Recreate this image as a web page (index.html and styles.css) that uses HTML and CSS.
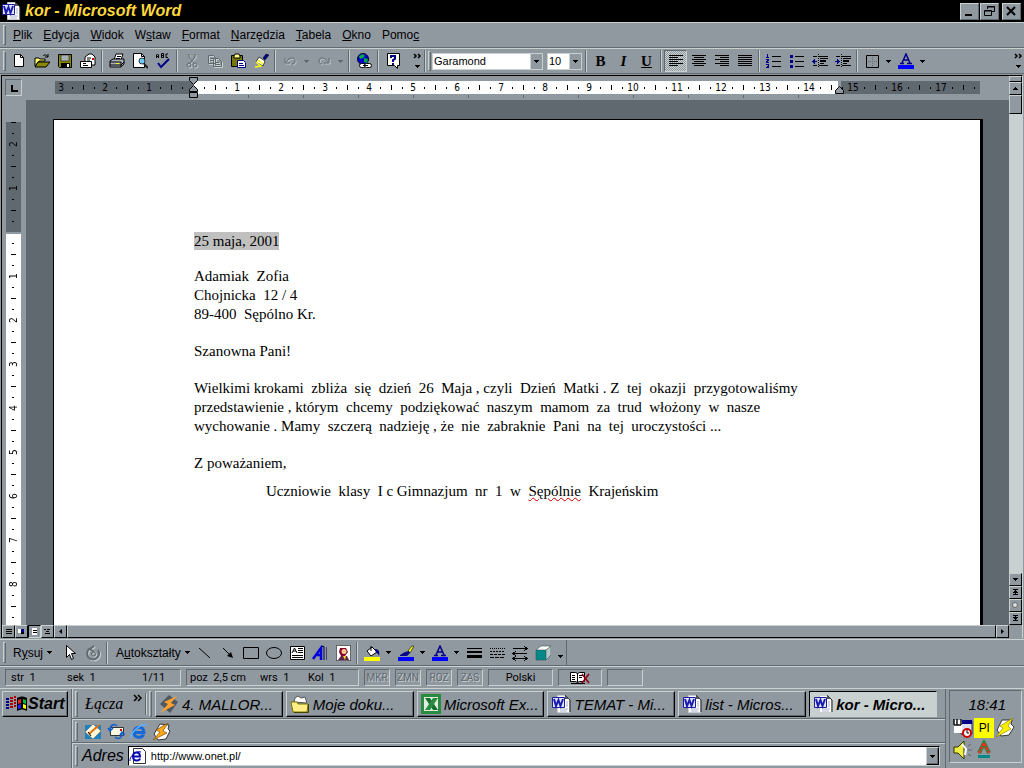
FILE: index.html
```html
<!DOCTYPE html>
<html lang="pl">
<head>
<meta charset="utf-8">
<title>kor - Microsoft Word</title>
<link rel="stylesheet" href="styles.css">
</head>
<body>
<svg class="defs" width="0" height="0" aria-hidden="true">
  <symbol id="word" viewBox="0 0 20 20">
    <path d="M6.500 1.500h8l4 4v13h-12z" fill="#fff" stroke="#c8ccd0"/><path d="M14 1l5 5v12" fill="none" stroke="#222"/><path d="M14 1v4h4z" fill="#555"/>
    <path d="M15 8h2M15 10h2M15 12h2M9 15h8M9 17h7" stroke="#a8b0c8"/>
    <path d="M1.500 3.500h12v10h-12z" fill="#dfe6ff" stroke="#1c1c9c"/>
    <path d="M3 5l2 7 2.500-6 2 6L12 5" fill="none" stroke="#1c1cac" stroke-width="2"/>
  </symbol>
  <symbol id="more" viewBox="0 0 12 16">
    <path d="M2 1l2 2-2 2M6 1l2 2-2 2" transform="translate(1)" fill="none" stroke="#000" stroke-width="1.5"/>
    <path d="M4 12h5v1H8v1H7v1H6v-1H5v-1H4z"/>
  </symbol>
  <symbol id="tri" viewBox="0 0 5 3"><path d="M0 0h5v1H4v1H3v1H2V2H1V1H0z"/></symbol>
  <symbol id="bolt" viewBox="0 0 18 18">
    <path d="M7 1l9 1-1 4 2 2-4 8-8 1-4-6z" fill="#fff" stroke="#333"/>
    <path d="M15 0L3 7l4 2-7 8 14-7-4-2z" fill="#ffa818" stroke="#7a4a10" stroke-width=".7"/>
  </symbol>
</svg>

<header class="titlebar">
  <svg class="ic20"><use href="#word"/></svg>
  <h1>kor - Microsoft Word</h1>
  <button class="win" aria-label="Minimalizuj"><svg width="13" height="13"><path d="M2 9h7v2H2z"/></svg></button>
  <button class="win" aria-label="Przywróć"><svg width="13" height="13" fill="none" stroke="#000"><path d="M4.500 4V1.500h7v5H9M4 2h8M1.500 5.500h7v5h-7zM1 6h8"/></svg></button>
  <button class="win close" aria-label="Zamknij"><svg width="13" height="13"><path d="M2 2l8 8M10 2l-8 8" stroke="#000" stroke-width="2"/></svg></button>
</header>

<nav class="menubar bar">
  <i class="grip"></i>
  <a href="#"><u>P</u>lik</a><a href="#"><u>E</u>dycja</a><a href="#"><u>W</u>idok</a><a href="#">W<u>s</u>taw</a><a href="#"><u>F</u>ormat</a><a href="#"><u>N</u>arzędzia</a><a href="#"><u>T</u>abela</a><a href="#"><u>O</u>kno</a><a href="#">Pomo<u>c</u></a>
</nav>

<div class="toolbar bar" role="toolbar" aria-label="Standardowy i formatowanie">
  <i class="grip"></i>
  <button class="tb" aria-label="Nowy"><svg class="ic"><path d="M3.500 1.500h6l3 3v9h-9z" fill="#fff" stroke="#000"/><path d="M9.500 1.500v3h3" fill="none" stroke="#000"/></svg></button>
  <button class="tb" aria-label="Otwórz"><svg class="ic"><path d="M1 5h4l1 1h5v2H5l-4 5z" fill="#ff6" stroke="#000"/><path d="M1 14l3-5h12l-4 5z" fill="#880" stroke="#000"/><path d="M9 3c2-2 4-1 5 1m0-3v3h-3" fill="none" stroke="#000"/></svg></button>
  <button class="tb" aria-label="Zapisz"><svg class="ic"><path d="M1.500 1.500h13v13h-12l-1-1z" fill="#880" stroke="#000"/><path d="M4 2h8v6H4z" fill="#a8b0b8" stroke="#000" stroke-width=".5"/><path d="M4 10h9v5H4z"/><path d="M10 11h2v3h-2z" fill="#fff"/></svg></button>
  <button class="tb" aria-label="Poczta"><svg class="ic"><path d="M5 4l4-3h3l3 3v8H5z" fill="#fff" stroke="#000"/><path d="M7 5h4M7 7h3" stroke="#000"/><path d="M12 5h2v2h-2z" fill="#c00"/><path d="M.500 8.500h11v6H.500z" fill="#fff" stroke="#000"/><path d="M3 10.500h3M3 12.500h5" stroke="#000"/></svg></button>
  <i class="sep"></i>
  <button class="tb" aria-label="Drukuj"><svg class="ic"><path d="M5 7l2-6h7l-2 6" fill="#fff" stroke="#000"/><path d="M8 3.500h4M7 5.500h4" stroke="#000"/><path d="M1 8l3-2h11v5l-3 3H1z" fill="#a8b0b8" stroke="#000"/><path d="M1 9h11v5M1 12h11l3-3" fill="none" stroke="#000"/><path d="M7 10h3v1H7z" fill="#ff0"/></svg></button>
  <button class="tb" aria-label="Podgląd wydruku"><svg class="ic"><path d="M1.500.500h8l3 3v11h-11z" fill="#fff" stroke="#000"/><path d="M9.500.500v3h3" fill="none" stroke="#000"/><circle cx="10" cy="8" r="3" fill="#6cf" stroke="#333"/><path d="M12 11l4 4" stroke="#222" stroke-width="2"/></svg></button>
  <button class="tb" aria-label="Pisownia"><svg class="ic"><path d="M1.500 5V2l1-1 1 1v3M1 3.500h3M6.500.500v4h2v-4h-2m0 2h2M13 1h-2v3.500h2" fill="none" stroke="#000"/><path d="M3 10l3 4 8-8" fill="none" stroke="#008" stroke-width="2"/></svg></button>
  <i class="sep"></i>
  <button class="tb" aria-label="Wytnij" disabled><svg class="ic off"><path d="M5 1v3l5 6M11 1v3l-5 6"/><circle cx="5" cy="12" r="2"/><circle cx="11" cy="12" r="2"/></svg></button>
  <button class="tb" aria-label="Kopiuj" disabled><svg class="ic off"><path d="M1.500 2.500h5l2 2v6h-7zM6.500 5.500h5l3 3v5h-8zM3 5.500h3M3 7.500h3M8 9.500h4M8 11.500h5"/></svg></button>
  <button class="tb" aria-label="Wklej"><svg class="ic"><path d="M1.500 2.500h11v11h-11z" fill="#770" stroke="#000"/><path d="M4 3l1-2h4l1 2v2H4z" fill="#ff8" stroke="#000"/><path d="M7.500 7.500h6l2 2v5h-8z" fill="#fff" stroke="#008"/><path d="M9 10.500h4M9 12.500h5" stroke="#008"/></svg></button>
  <button class="tb" aria-label="Malarz formatów"><svg class="ic"><path d="M10 5l3-4 3 1-4 5z" fill="#008" stroke="#000" stroke-width=".5"/><path d="M6 4l6 4-2 5-7-4z" fill="#fff" stroke="#000" stroke-width=".7"/><path d="M5 7l5 4M3 9l5 4-6 1" fill="none" stroke="#ff0" stroke-width="1.500"/></svg></button>
  <i class="sep"></i>
  <button class="tb" aria-label="Cofnij" disabled><svg class="ic off"><path d="M3 5v5h5M4 9c3-5 9-5 9-1 0 2-1 3-3 3"/></svg></button>
  <button class="dd" aria-label="Lista cofania" disabled><svg class="tri dim"><use href="#tri"/></svg></button>
  <button class="tb" aria-label="Ponów" disabled><svg class="ic off"><path d="M13 5v5H8M12 9C9 4 3 4 3 8c0 2 1 3 3 3"/></svg></button>
  <button class="dd" aria-label="Lista ponawiania" disabled><svg class="tri dim"><use href="#tri"/></svg></button>
  <i class="sep"></i>
  <button class="tb" aria-label="Hiperłącze"><svg class="ic"><circle cx="7" cy="6" r="5.500" fill="#00c" stroke="#003"/><path d="M3 3l4-2 2 2-2 2-3 1zM8 5l4 1-1 4-3-1z" fill="#0a4"/><rect x="3.500" y="10.500" width="6" height="4" rx="2" fill="#fff" stroke="#000"/><rect x="8.500" y="10.500" width="7" height="4" rx="2" fill="#fff" stroke="#000"/><path d="M7 12.500h5" stroke="#000"/></svg></button>
  <i class="sep"></i>
  <button class="tb" aria-label="Pomoc"><svg class="ic"><path d="M2.500.500h12v12h-2v3l-3-3h-7z" fill="#ffe" stroke="#000"/><path d="M6 5V3h4v3L8 7v2" fill="none" stroke="#008" stroke-width="2"/><path d="M7 10h2v2H7z" fill="#008"/></svg></button>
  <button class="more" aria-label="Więcej przycisków"><svg width="12" height="16"><use href="#more"/></svg></button>
  <i class="sep narrow"></i>
  <i class="grip second"></i>
  <select class="combo face" aria-label="Czcionka"><option>Garamond</option></select>
  <select class="combo size" aria-label="Rozmiar"><option>10</option></select>
  <i class="sep"></i>
  <button class="tb glyph" aria-label="Pogrubienie"><b>B</b></button>
  <button class="tb glyph" aria-label="Kursywa"><em>I</em></button>
  <button class="tb glyph" aria-label="Podkreślenie"><u>U</u></button>
  <i class="sep"></i>
  <button class="tb on" aria-label="Do lewej" aria-pressed="true"><svg class="ic ln"><path d="M1 2.500h14M1 4.500h9M1 6.500h14M1 8.500h9M1 10.500h14M1 12.500h9"/></svg></button>
  <button class="tb" aria-label="Do środka"><svg class="ic ln"><path d="M1 2.500h14M3 4.500h10M1 6.500h14M3 8.500h10M1 10.500h14M3 12.500h10"/></svg></button>
  <button class="tb" aria-label="Do prawej"><svg class="ic ln"><path d="M1 2.500h14M6 4.500h9M1 6.500h14M6 8.500h9M1 10.500h14M6 12.500h9"/></svg></button>
  <button class="tb" aria-label="Wyjustuj"><svg class="ic ln"><path d="M1 2.500h14M1 4.500h14M1 6.500h14M1 8.500h14M1 10.500h14M1 12.500h14"/></svg></button>
  <i class="sep"></i>
  <button class="tb" aria-label="Numerowanie"><svg class="ic ln"><path d="M6 3.500h9M6 8.500h9M6 13.500h9"/><path d="M.500 1.500h1v3M0 4.500h3M0 6.500h2.500v1l-2 1v1H3M0 11.500h2.500v3H0M1 13h2" stroke="#008"/></svg></button>
  <button class="tb" aria-label="Wypunktowanie"><svg class="ic ln"><path d="M6 3.500h9M6 8.500h9M6 13.500h9"/><path d="M1 2h3v3H1zM1 7h3v3H1zM1 12h3v3H1z" fill="#008" stroke="none"/></svg></button>
  <button class="tb" aria-label="Zmniejsz wcięcie"><svg class="ic ln"><path d="M1 3.500h4M7 3.500h9M8 5.500h8M8 10.500h4M1 12.500h4M7 12.500h9"/><path d="M6.500 1v14" stroke-dasharray="1 1"/><path d="M8 8h6" stroke-width="2"/><path d="M0 8.500h5M2.500 6v5M1.500 7v3" stroke="#008"/></svg></button>
  <button class="tb" aria-label="Zwiększ wcięcie"><svg class="ic ln"><path d="M1 3.500h4M7 3.500h9M8 5.500h8M8 10.500h4M1 12.500h4M7 12.500h9"/><path d="M6.500 1v14" stroke-dasharray="1 1"/><path d="M8 8h6" stroke-width="2"/><path d="M0 8.500h5M2.500 6v5M3.500 7v3" stroke="#008"/></svg></button>
  <i class="sep"></i>
  <button class="tb" aria-label="Obramowanie"><svg class="ic"><path d="M2.500 2.500h12v12h-12z" fill="none" stroke="#000"/><path d="M4 8.500h10M8.500 4v10" stroke="#606870" stroke-dasharray="1 1"/></svg></button>
  <button class="dd" aria-label="Rodzaje obramowania"><svg class="tri"><use href="#tri"/></svg></button>
  <button class="tb" aria-label="Kolor czcionki"><svg class="ic"><path d="M2 10.500h4M9 10.500h5M4 10l4-9 4 9M6 7h5" fill="none" stroke="#008" stroke-width="1.500"/><path d="M0 12h16v4H0z" fill="#00f"/></svg></button>
  <button class="dd" aria-label="Wybór koloru czcionki"><svg class="tri"><use href="#tri"/></svg></button>
  <button class="more end" aria-label="Więcej przycisków formatowania"><svg width="12" height="16"><use href="#more"/></svg></button>
</div>

<main class="workspace">
  <div class="hruler">
    <button class="tabsel" aria-label="Tabulator"><svg width="15" height="14"><path d="M5 4h2v5h5v2H5z"/></svg></button>
    <div class="htrack">
      <span>3</span><span>2</span><span>1</span><span></span><span>1</span><span>2</span><span>3</span><span>4</span><span>5</span><span>6</span><span>7</span><span>8</span><span>9</span><span>10</span><span>11</span><span>12</span><span>13</span><span>14</span><span>15</span><span>16</span><span>17</span><span></span>
      <svg class="indent" width="10" height="22"><g fill="#9098a0" stroke="#000"><path d="M.500.500h8v3l-4 4-4-4zM4.500 8.500l4 4v2h-8v-2zM.500 15.500h8v5h-8z"/></g></svg>
      <svg class="rindent" width="10" height="9"><path d="M4.500.500l4 4v3h-8v-3z" fill="#9098a0" stroke="#000"/></svg>
    </div>
  </div>
  <div class="vruler">
    <div class="vtrack"><span>2</span><span>1</span><span></span><span>1</span><span>2</span><span>3</span><span>4</span><span>5</span><span>6</span><span>7</span><span>8</span><span></span></div>
  </div>
  <div class="desk">
    <article class="page">
      <p class="date"><mark>25 maja, 2001</mark></p>
      <p>Adamiak  Zofia<br>Chojnicka  12 / 4<br>89-400  Sępólno Kr.</p>
      <p>Szanowna Pani!</p>
      <p>Wielkimi krokami  zbliża  się  dzień  26  Maja , czyli  Dzień  Matki . Z  tej  okazji  przygotowaliśmy<br>przedstawienie , którym  chcemy  podziękować  naszym  mamom  za  trud  włożony  w  nasze<br>wychowanie . Mamy  szczerą  nadzieję , że  nie  zabraknie  Pani  na  tej  uroczystości ...</p>
      <p class="closing">Z poważaniem,</p>
      <p class="sign">Uczniowie  klasy  I c Gimnazjum  nr  1  w  <span class="typo">Sępólnie</span>  Krajeńskim</p>
    </article>
  </div>
  <div class="vscroll">
    <i class="sb split"></i>
    <button class="sb" aria-label="W górę"><svg class="tri up"><use href="#tri"/></svg></button>
    <i class="sb vthumb"></i>
    <i class="trackfill"></i>
    <button class="sb" aria-label="W dół"><svg class="tri"><use href="#tri"/></svg></button>
    <button class="sb" aria-label="Poprzednia strona"><svg width="7" height="7"><path d="M1 0h5v1H1zM3 1h1v1h1v1h1v1H1V3h1V2h1zM3 4h1v1h2v1H1V5h2z"/></svg></button>
    <button class="sb" aria-label="Wybierz obiekt"><svg width="7" height="7"><circle cx="3" cy="3" r="2.500" fill="#ddd" stroke="#666"/></svg></button>
    <button class="sb" aria-label="Następna strona"><svg width="7" height="7"><path d="M1 0h5v1H4v1h2v1H5v1H4v1H3V4H2V3H1V2h2V1H1zM1 5h5v1H1z"/></svg></button>
  </div>
  <div class="hscroll">
    <button class="sb" aria-label="Widok normalny"><svg width="7" height="7"><path d="M1 1.500h6M1 3.500h6M1 5.500h6" stroke="#000"/></svg></button>
    <button class="sb" aria-label="Widok sieci Web"><svg width="7" height="7"><path d="M0 1h3v4H0z" fill="#fff"/><path d="M3 1h3v3H3z" fill="#008"/><path d="M3 4h3v2H3z"/></svg></button>
    <button class="sb pressed" aria-label="Widok wydruku" aria-pressed="true"><svg width="7" height="7"><path d="M1 0h5v7H1z" fill="#fff"/><path d="M2 2.500h4M2 4.500h4" stroke="#000"/></svg></button>
    <button class="sb" aria-label="Widok konspektu"><svg width="7" height="7"><path d="M0 1.500h2M3 1.500h3M2 3.500h3M1 5.500h5" stroke="#000"/></svg></button>
    <button class="sb" aria-label="W lewo"><svg width="5" height="7"><path d="M4 1v5L1 3.500z"/></svg></button>
    <i class="sb hthumb"></i>
    <button class="sb" aria-label="W prawo"><svg width="5" height="7"><path d="M1 1v5l3-2.500z"/></svg></button>
  </div>
</main>

<div class="drawbar bar" role="toolbar" aria-label="Rysowanie">
  <i class="grip"></i>
  <button class="txt draw"><span>R<u>y</u>suj</span><svg class="tri"><use href="#tri"/></svg></button>
  <button class="tb" aria-label="Zaznacz obiekty"><svg class="ic"><path d="M4.500.500v12l3-3 2 5 2-1-2-5h4z" fill="#fff" stroke="#000"/></svg></button>
  <button class="tb" aria-label="Obróć" disabled><svg class="ic off"><path d="M4 4a6 6 0 1 0 9 1M9 1l-4 3 4 3" stroke-width="2"/><circle cx="8.500" cy="9" r="2"/></svg></button>
  <i class="sep"></i>
  <button class="txt auto"><span>A<u>u</u>tokształty</span><svg class="tri"><use href="#tri"/></svg></button>
  <button class="tb" aria-label="Linia"><svg class="ic"><path d="M2 3l11 10" stroke="#000"/></svg></button>
  <button class="tb" aria-label="Strzałka"><svg class="ic"><path d="M3 3l9 9" stroke="#000"/><path d="M13 13L7 11l4-4z"/></svg></button>
  <button class="tb" aria-label="Prostokąt"><svg class="ic"><path d="M.500 2.500h15v11H.500z" fill="none" stroke="#000"/></svg></button>
  <button class="tb" aria-label="Elipsa"><svg class="ic"><ellipse cx="8" cy="8" rx="7.500" ry="5.500" fill="none" stroke="#000"/></svg></button>
  <button class="tb" aria-label="Pole tekstowe"><svg class="ic"><path d="M1.500 1.500h14v13h-14z" fill="#fff" stroke="#000"/><path d="M3 8l2.500-5L8 8M4 6h3M9 3.500h5M9 5.500h5M9 7.500h5M3 10.500h11M3 12.500h11" fill="none" stroke="#000"/></svg></button>
  <button class="tb" aria-label="WordArt"><svg class="ic"><path d="M1 14L9 3v12M5 10h5" fill="none" stroke="#00d" stroke-width="2.500"/><path d="M10 1.500h2V15" fill="none" stroke="#004"/><path d="M14.500 2v13" stroke="#446"/></svg></button>
  <button class="tb" aria-label="Clipart"><svg class="ic"><path d="M1.500.500h14v15h-14z" fill="#fff" stroke="#000" stroke-dasharray="1 1"/><path d="M5 3h6l2 4-3 4H6L4 7z" fill="#803"/><circle cx="9" cy="6.500" r="2.500" fill="#fc8"/><path d="M3 15l3-4h6l2 4z" fill="#602050"/><path d="M8 11h3l-1 4z" fill="#fd0"/></svg></button>
  <i class="sep"></i>
  <button class="tb" aria-label="Kolor wypełnienia"><svg class="ic"><path d="M3 6l5-4 5 5-6 4z" fill="#fff" stroke="#000"/><path d="M7 6V1" stroke="#000"/><path d="M11 4c4 0 5 3 4 7-1-3-2-3-3-3z" fill="#008"/><path d="M0 12h16v4H0z" fill="#ff0"/></svg></button>
  <button class="dd" aria-label="Wybór wypełnienia"><svg class="tri"><use href="#tri"/></svg></button>
  <button class="tb" aria-label="Kolor linii"><svg class="ic"><path d="M10 6l4-5h2l-4 7z" fill="#ff0" stroke="#000" stroke-width=".6"/><path d="M2 10l5-3 4-1 1 2-3 3H2z" fill="#008"/><path d="M0 12h16v4H0z" fill="#00f"/></svg></button>
  <button class="dd" aria-label="Wybór koloru linii"><svg class="tri"><use href="#tri"/></svg></button>
  <button class="tb" aria-label="Kolor czcionki rysunku"><svg class="ic"><path d="M2 10.500h4M9 10.500h5M4 10l4-9 4 9M6 7h5" fill="none" stroke="#008" stroke-width="1.500"/><path d="M0 12h16v4H0z" fill="#00f"/></svg></button>
  <button class="dd" aria-label="Wybór koloru tekstu"><svg class="tri"><use href="#tri"/></svg></button>
  <button class="tb" aria-label="Styl linii"><svg class="ic ln"><path d="M1 3.500h15"/><path d="M1 7h15" stroke-width="2"/><path d="M1 11.500h15" stroke-width="3"/></svg></button>
  <button class="tb" aria-label="Styl kreski"><svg class="ic ln"><path d="M1 3.500h15" stroke-dasharray="1 1"/><path d="M1 6.500h15" stroke-dasharray="2 1"/><path d="M1 9.500h15" stroke-dasharray="3 1"/><path d="M1 12.500h15" stroke-dasharray="4 1"/></svg></button>
  <button class="tb" aria-label="Styl strzałki"><svg class="ic ln"><path d="M1 3.500h14M12 1l3 2.500L12 6M1 8.500h14M4 6L1 8.500 4 11M1 13.500h14M12 11l3 2.500-3 2.500M4 11l-3 2.500L4 16"/></svg></button>
  <button class="tb" aria-label="Trójwymiarowy"><svg class="ic"><path d="M1 5h10v10H1z" fill="#088"/><path d="M1 5l5-4h10l-5 4z" fill="#fff"/><path d="M11 5l5-4v9l-5 5z" fill="#b8c8c8"/><path d="M1 5l5-4h10v9l-5 5H1zM11 5v10M1 5h10l5-4" fill="none" stroke="#355" stroke-width=".6"/></svg></button>
  <button class="dd low" aria-label="Więcej"><svg class="tri"><use href="#tri"/></svg></button>
  <i class="barend"></i>
</div>

<footer class="status bar">
  <div class="cell pos"><span>str&nbsp; 1</span><span>sek&nbsp; 1</span><span>1/11</span></div>
  <div class="cell caret"><span>poz&nbsp; 2,5 cm</span><span>wrs&nbsp; 1</span><span>Kol&nbsp; 1</span></div>
  <div class="flags"><div class="cell flag">MKR</div><div class="cell flag">ZMN</div><div class="cell flag">ROZ</div><div class="cell flag">ZAS</div></div>
  <div class="cell lang">Polski</div>
  <div class="cell book"><svg width="22" height="14"><path d="M1.500 1.500h5l2 1 2-1h5v9h-5l-2 1-2-1h-5z" fill="#fff" stroke="#000"/><path d="M2 12.500h14M8.500 2v9M3 4.500h3M3 6.500h3M10 4.500h4M10 6.500h3M3 8.500h3" stroke="#000"/><path d="M13 3l7 9M20 3l-7 9" stroke="#900010" stroke-width="1.500"/></svg></div>
  <div class="cell blank"></div>
</footer>

<div class="taskbar">
  <button class="start raised"><svg width="22" height="18"><path d="M0 4h3M0 7h3M0 10h3M0 13h3" stroke="#008" stroke-width="2"/><path d="M4 3h3M4 6h3M4 9h3M4 12h3M8 2h2M8 5h2M8 8h2M8 11h2" stroke="#a00" stroke-width="2"/><path d="M11 3c3-2 6-2 10 0v13c-4-2-7-2-10 0z"/><path d="M12 5l3-1v4l-3 1z" fill="#e22"/><path d="M17 4l3 1v4l-3-1z" fill="#0b3"/><path d="M12 10l3-1v4l-3 1z" fill="#22f"/><path d="M17 9l3 1v4l-3-1z" fill="#ff0"/></svg>Start</button>
  <div class="bands">
    <div class="band">
      <i class="grip"></i>
      <a class="links" href="#">Łącza</a>
      <button class="chev" aria-label="Więcej łączy"><svg width="10" height="8"><path d="M1 1l3 3-3 3M5 1l3 3-3 3" fill="none" stroke="#000" stroke-width="1.500"/></svg></button>
      <i class="sep narrow"></i>
      <i class="grip second"></i>
      <div class="tasks">
        <button class="task raised"><svg class="ic20" viewBox="0 0 20 20"><path d="M10 1l9 7-8 11-10-9z" fill="#505860"/><path d="M18 2L5 8l4 2-8 9 15-8-4-2z" fill="#ffa030"/></svg><span>4. MALLOR...</span></button>
        <button class="task raised"><svg class="ic20" viewBox="0 0 20 20"><path d="M4 8l1-4 3-2 3 2 4-1 2 6z" fill="#fff" stroke="#555"/><path d="M1 8h6l1 2h10l-1 8H3z" fill="#fe8" stroke="#770"/><path d="M18.500 10v8.500H4" fill="none" stroke="#440"/></svg><span>Moje doku...</span></button>
        <button class="task raised"><svg class="ic20" viewBox="0 0 20 20"><path d="M0 0h20v20H0z" fill="#2a8a40"/><path d="M3 3h14v14H3z" fill="#dfeee0"/><path d="M4 4h5l8 12h-5z" fill="#187030"/><path d="M12 4h5L9 16H4z" fill="#2a8a40"/></svg><span>Microsoft Ex...</span></button>
        <button class="task raised"><svg class="ic20"><use href="#word"/></svg><span>TEMAT - Mi...</span></button>
        <button class="task raised"><svg class="ic20"><use href="#word"/></svg><span>list - Micros...</span></button>
        <button class="task active" aria-pressed="true"><svg class="ic20"><use href="#word"/></svg><span>kor - Micro...</span></button>
      </div>
    </div>
    <div class="band quick">
      <i class="grip"></i>
      <button class="ql" aria-label="Pokaż pulpit"><svg width="18" height="18"><path d="M1 2h16v14H1z" fill="#2080c0"/><path d="M9 1l8 7-8 8-8-7z" fill="#fff8d8" stroke="#666" stroke-width=".6"/><path d="M5 11L15 2" stroke="#e07010" stroke-width="2"/><path d="M4 9l3 4" stroke="#000"/></svg></button>
      <button class="ql" aria-label="Outlook Express"><svg width="18" height="18"><path d="M3.500 4.500h13v8h-13z" fill="#fff8e0" stroke="#333"/><path d="M13 6h2v2h-2z" fill="#c00"/><path d="M10 3C7 0 3 2 3 7M1 5l2 3 3-3M8 14c3 3 7 1 7-3m-2 1l2-3 3 3" fill="none" stroke="#1060d0" stroke-width="1.500"/></svg></button>
      <button class="ql" aria-label="Internet Explorer"><svg width="18" height="18"><path d="M4 9.500h10C14 2 4 3 4 9.500c0 6 8 6 9.500 2" fill="none" stroke="#1468d8" stroke-width="3"/><path d="M1 16C-1 12 9 0 17 2" fill="none" stroke="#60b0ff" stroke-width="1.500"/></svg></button>
      <button class="ql" aria-label="Winamp"><svg width="18" height="18"><use href="#bolt"/></svg></button>
    </div>
    <div class="band address">
      <i class="grip"></i>
      <label for="url">Adres</label>
      <div class="urlbox">
        <svg width="18" height="18"><path d="M4.500 1.500h9l3 3v12h-12z" fill="#fff" stroke="#333"/><path d="M4 9.500h7C11 4 4 4 4 9.500c0 5 6 5 7 2" fill="none" stroke="#0808b0" stroke-width="2"/><path d="M1 14C0 11 6 3 12 5" fill="none" stroke="#0808b0"/></svg>
        <input id="url" type="text" value="http://www.onet.pl/">
        <button class="raised" aria-label="Lista adresów"><svg class="tri"><use href="#tri"/></svg></button>
      </div>
    </div>
  </div>
  <div class="tray">
    <time>18:41</time>
    <div class="icons">
      <svg width="20" height="20"><path d="M8 3h11v13H8z" fill="#dde" stroke="#333"/><path d="M8 2h11v4H8z" fill="#008"/><path d="M1 2h8v13H1z" fill="#fff"/><path d="M1 1v6M4 1v6M8 1v6M1 7h7" stroke="#111" stroke-width="1.500"/><circle cx="14" cy="15" r="4" fill="#fff" stroke="#c00" stroke-width="2"/><path d="M14 12v3h2" fill="none" stroke="#000"/></svg>
      <span class="kbd">Pl</span>
      <svg width="20" height="20"><path d="M7 2l10 0-1 4 3 3-5 8-8 1-4-6z" fill="#fff" stroke="#333"/><path d="M18 0L5 8l3 2-7 9 15-8-3-3z" fill="#fe0" stroke="#770" stroke-width=".6"/></svg>
      <svg width="20" height="20"><path d="M1 7h4l6-6v18l-6-6H1z" fill="#ee4" stroke="#330"/><path d="M9 4l4 5-1 6" fill="none" stroke="#fff" stroke-width="2"/><path d="M15 6l3-2M15 10h4M15 14l3 2" stroke="#606870"/></svg>
      <svg width="20" height="20"><path d="M5 13l5-10 5 10" fill="none" stroke="#284" stroke-width="4"/><path d="M5 13l5-10 5 10" fill="none" stroke="#f03018" stroke-width="2.500" stroke-dasharray="3 1"/><path d="M4 15h12v3H4z" fill="#088"/></svg>
    </div>
  </div>
</div>
</body>
</html>
```
FILE: styles.css
```css
:root {
  --face: #9098a0;
  --dark: #606870;
  --light: #c8d0d0;
}
* { box-sizing: border-box; }
body {
  margin: 0;
  height: 100vh;
  display: flex;
  flex-direction: column;
  background: var(--face);
  color: #000;
  font: 12px "Liberation Sans", Arial, sans-serif;
  overflow: hidden;
}
button, select, input { font: inherit; color: inherit; margin: 0; padding: 0; border: 0; background: none; border-radius: 0; }
a { color: inherit; text-decoration: none; }
svg { display: block; flex: none; }
.defs { position: absolute; }
.ic { width: 16px; height: 16px; }
.ic20 { width: 20px; height: 20px; }
.ln { fill: none; stroke: #000; shape-rendering: crispEdges; }
.off { fill: none; stroke: var(--dark); filter: drop-shadow(1px 1px 0 var(--light)); }
.tri { width: 5px; height: 3px; }
.tri.dim { fill: var(--dark); }
.tri.up { transform: rotate(180deg); }
.raised { background: var(--face); border: 1px solid; border-color: var(--light) #000 #000 var(--light); box-shadow: inset -1px -1px var(--dark); }

/* Title bar */
.titlebar { flex: none; height: 22px; display: flex; align-items: center; background: #000; color: #ffd83c; padding: 0 3px 0 1px; }
.titlebar h1 { flex: 1; margin: 0 0 0 4px; font: italic bold 16px "Liberation Sans", Arial, sans-serif; }
.win { width: 19px; height: 17px; display: grid; place-items: center; background: var(--face); border: 1px solid; border-color: var(--light) var(--dark) var(--dark) var(--light); color: #000; }
.win + .win { margin-left: 1px; }
.win + .close { margin-left: 3px; }

/* Menu and tool bars */
.bar { flex: none; display: flex; align-items: center; border-top: 1px solid var(--light); border-bottom: 1px solid var(--dark); }
.grip { flex: none; width: 3px; align-self: stretch; margin: 2px 1px 2px 3px; background: var(--face); border: 1px solid; border-color: var(--light) var(--dark) var(--dark) var(--light); }
.menubar { height: 26px; gap: 11px; }
.menubar .grip { margin-right: -4px; }
.toolbar { height: 26px; }
.tb { flex: none; width: 23px; height: 22px; display: grid; place-items: center; }
.tb.on { border: 1px solid; border-color: var(--dark) var(--light) var(--light) var(--dark); background: repeating-conic-gradient(var(--light) 0 25%, var(--face) 0 50%) 0 0 / 2px 2px; }
.dd { flex: none; width: 11px; height: 22px; display: grid; place-items: center; }
.dd.low { padding-top: 8px; margin-left: 1px; }
.sep { flex: none; width: 2px; height: 22px; margin: 0 2px; border-left: 1px solid var(--dark); border-right: 1px solid var(--light); }
.sep.narrow { margin: 0; }
.more { flex: none; width: 12px; margin: 0 1px 0 7px; }
.more.end { margin: 0 0 0 auto; }
.grip.second { margin-left: 2px; }
.glyph { font: 15px "Liberation Serif", "Times New Roman", serif; font-weight: bold; }
.combo { appearance: none; flex: none; height: 17px; padding-left: 1px; font-size: 11px; border: 1px solid var(--light); background: linear-gradient(#000, #000) no-repeat right 3px top 6px / 5px 1px, linear-gradient(#000, #000) no-repeat right 4px top 7px / 3px 1px, linear-gradient(#000, #000) no-repeat right 5px top 8px / 1px 1px, linear-gradient(90deg, #fff calc(100% - 12px), var(--light) 0, var(--light) calc(100% - 11px), var(--face) 0); }
.combo.face { width: 111px; }
.combo.size { width: 35px; margin: 0 1px 0 4px; }

/* Editing area */
.workspace { flex: 1; min-height: 0; display: grid; grid-template-columns: 24px minmax(0, 1fr) 13px; grid-template-rows: 24px minmax(0, 1fr) 13px; border: solid #000; border-width: 1px 0 0 1px; border-right: 1px solid var(--light); margin: 1px; }
.hruler { grid-column: 1 / 3; min-width: 0; display: flex; padding: 3px 29px 0 3px; background: repeating-linear-gradient(90deg, var(--dark) 0 1px, transparent 1px 55px) no-repeat 246px 19px / 580px 3px, var(--face); }
.tabsel { flex: none; width: 17px; height: 17px; border: 1px solid; border-color: var(--dark) var(--light) var(--light) var(--dark); }
.htrack { position: relative; flex: 1; min-width: 0; height: 13px; margin: 2px 0 0 33px; display: flex; background: linear-gradient(90deg, var(--dark) 138px, #fff 138px 783px, var(--face) 783px 786px, var(--dark) 786px); clip-path: inset(-6px 0 -8px 0); }
.htrack span { flex: none; width: 44px; height: 13px; text-align: center; font: 10px/13px "DejaVu Sans Condensed", "Liberation Sans", sans-serif; background: linear-gradient(#000, #000) no-repeat 0 4px / 1px 5px, linear-gradient(#000, #000) no-repeat 11px 6px / 1px 2px, linear-gradient(#000, #000) no-repeat 33px 6px / 1px 2px; }
.htrack span:first-child { margin-left: -16px; }
.indent { position: absolute; left: 134px; top: -4px; }
.rindent { position: absolute; left: 780px; top: 5px; }
.vruler { background: var(--face); padding: 22px 5px 0 4px; overflow: hidden; }
.vtrack { height: 100%; overflow: hidden; background: linear-gradient(var(--dark) 110px, var(--face) 110px 112px, #fff 112px); }
.vtrack span { display: block; height: 44px; width: 15px; writing-mode: vertical-rl; transform: rotate(180deg); text-align: center; font: 10px/15px "DejaVu Sans Condensed", "Liberation Sans", sans-serif; background: linear-gradient(#000, #000) no-repeat 5px 43px / 5px 1px, linear-gradient(#000, #000) no-repeat 7px 32px / 2px 1px, linear-gradient(#000, #000) no-repeat 7px 10px / 2px 1px; }
.desk { min-height: 0; overflow: hidden; background: var(--dark); padding: 19px 26px 0 27px; }
.page { height: 100%; background: #fff; border: solid #000; border-width: 1px 3px 0 1px; padding: 112px 138px 0 140px; font: 15px/19px "Liberation Serif", "Times New Roman", serif; }
.page p { margin: 0 0 18px; white-space: pre; }
.page .date { margin-bottom: 16px; }
.page mark { padding: 1px 0; background: #c0c0c0; color: inherit; }
.page .closing { margin-bottom: 9px; }
.page .sign { padding-left: 72px; }
.typo { text-decoration: underline wavy #d00000 1px; }

/* Scroll bars */
.sb { flex: none; width: 13px; height: 13px; display: grid; place-items: center; background: var(--face); border: 1px solid; border-color: var(--light) #000 #000 var(--light); }
.sb.pressed { border-color: #000 var(--light) var(--light) #000; }
.vscroll { grid-row: 1 / 3; grid-column: 3; display: flex; flex-direction: column; }
.split { height: 6px; }
.vthumb { height: 19px; }
.trackfill { flex: 1; background: var(--light); }
.hscroll { grid-column: 1 / 3; display: flex; }
.hthumb { flex: 1; width: auto; }

/* Drawing bar */
.drawbar { height: 27px; }
.txt { display: flex; align-items: center; gap: 4px; height: 22px; }
.draw { width: 51px; padding-left: 6px; }
.auto { width: 83px; padding-left: 6px; }
.barend { align-self: stretch; width: 1px; background: var(--dark); }

/* Status bar */
.status { height: 22px; padding: 0 5px; gap: 5px; border-bottom: 0; font: 11px Roboto, "Liberation Sans", sans-serif; }
.cell { display: flex; align-items: center; justify-content: center; height: 17px; border: 1px solid; border-color: var(--dark) var(--light) var(--light) var(--dark); white-space: pre; }
.pos { width: 176px; display: grid; grid-template-columns: 56px 75px auto; justify-content: start; padding-left: 5px; }
.caret { width: 173px; display: grid; grid-template-columns: 70px 48px auto; justify-content: start; padding-left: 3px; }
.flags { display: flex; gap: 5px; }
.flag { width: 26px; font-size: 10px; color: var(--dark); text-shadow: 1px 1px var(--light); }
.lang { width: 65px; }
.book { width: 44px; }
.blank { width: 36px; }

/* Task bar */
.taskbar { flex: none; height: 80px; display: flex; border-top: 1px solid var(--light); }
.start { flex: none; width: 66px; height: 26px; margin: 2px 3px 0 2px; padding-left: 3px; display: flex; align-items: center; font: italic bold 16px "Liberation Sans", Arial, sans-serif; }
.bands { flex: 1; min-width: 0; display: grid; grid-template-rows: 30px 24px 1fr; border: solid var(--dark); border-width: 0 1px; box-shadow: inset 1px 0 var(--light); font-style: italic; font-size: 16px; }
.band { display: flex; align-items: center; min-width: 0; }
.band + .band { border-top: 1px solid var(--light); box-shadow: 0 -1px var(--dark); }
.links { margin-left: 6px; width: 48px; font: italic 16px "Liberation Serif", serif; }
.chev { align-self: flex-start; padding: 5px 0; margin-right: 2px; }
.tasks { flex: 1; display: flex; gap: 3px; height: 26px; margin: 0 8px 0 2px; min-width: 0; }
.task { flex: 1; min-width: 0; display: flex; align-items: center; gap: 3px; padding-left: 3px; font: italic 15px "Liberation Sans", Arial, sans-serif; white-space: nowrap; }
.task.active { font-weight: bold; background: var(--light); border: 1px solid; border-color: #000 var(--light) var(--light) #000; }
.quick { gap: 5px; }
.quick .grip { margin-right: 1px; }
.address label { margin: 0 4px 0 3px; }
.urlbox { flex: 1; display: flex; align-items: center; height: 20px; margin-right: 5px; background: #fff; border: 1px solid; border-color: #000 var(--light) var(--light) #000; }
.urlbox input { flex: 1; min-width: 0; margin-left: 4px; font: 11px "Liberation Sans", Arial, sans-serif; outline: 0; }
.urlbox button { width: 13px; height: 18px; display: grid; place-items: center; }
.tray { flex: none; width: 73px; height: 73px; margin: 1px 2px 0 3px; border: 1px solid; border-color: var(--dark) var(--light) var(--light) var(--dark); }
.tray time { display: block; height: 27px; padding-right: 15px; text-align: right; font: italic 15px/28px "Liberation Sans", Arial, sans-serif; }
.icons { display: grid; grid-template-columns: 20px 20px 20px; gap: 2px 1px; padding-left: 3px; }
.kbd { display: grid; place-items: center; width: 20px; height: 20px; background: #ff0; }
```
